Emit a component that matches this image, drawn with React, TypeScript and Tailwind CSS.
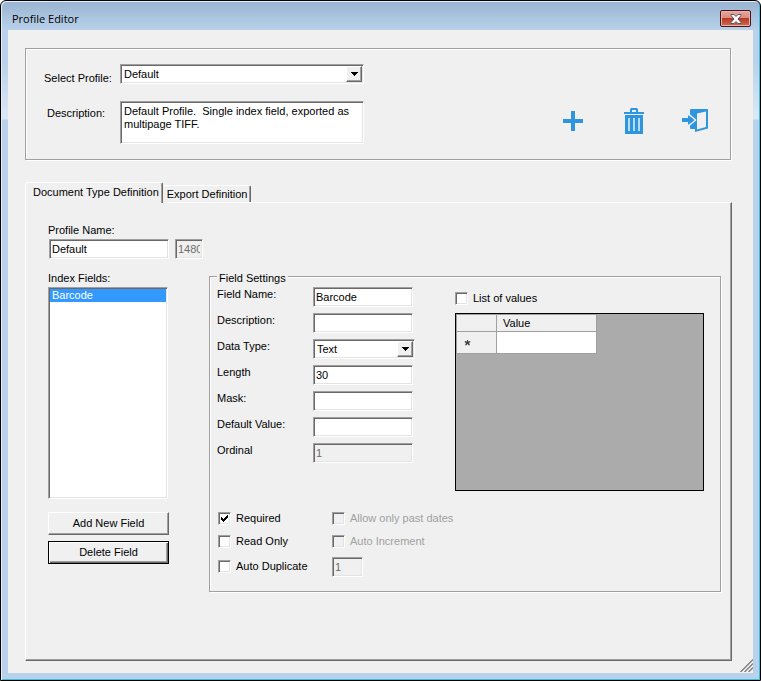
import React from "react";

const sunken =
  "rounded-none border border-t-[#a0a0a0] border-l-[#a0a0a0] border-r-white border-b-white shadow-[inset_1px_1px_0_#696969,inset_-1px_-1px_0_#e3e3e3]";
const raised =
  "border border-t-white border-l-white border-r-[#696969] border-b-[#696969] shadow-[inset_-1px_-1px_0_#a0a0a0]";
const etched =
  "border border-[#a0a0a0] shadow-[1px_1px_0_#ffffff,inset_1px_1px_0_#ffffff]";

type TextBoxProps = {
  id: string;
  value?: string;
  disabled?: boolean;
  className?: string;
  label?: string;
};

function TextBox({ id, value = "", disabled, className = "", label }: TextBoxProps) {
  return (
    <input
      id={id}
      type="text"
      aria-label={label}
      defaultValue={value}
      disabled={disabled}
      className={`h-5 px-[2px] outline-none ${sunken} ${
        disabled ? "bg-[#f0f0f0] text-[#6d6d6d]" : "bg-white"
      } ${className}`}
    />
  );
}

function ComboBox({ id, options, className = "" }: { id: string; options: string[]; className?: string }) {
  return (
    <div className={`relative ${className}`}>
      <select id={id} className={`block h-5 w-full appearance-none bg-white px-[3px] outline-none ${sunken}`}>
        {options.map((o) => (
          <option key={o}>{o}</option>
        ))}
      </select>
      <span
        className={`pointer-events-none absolute top-[2px] right-[2px] flex h-4 w-4 items-center justify-center bg-[#f0f0f0] ${raised}`}
      >
        <svg width="7" height="4" viewBox="0 0 7 4" shapeRendering="crispEdges">
          <path d="M0 0h7v1H0zM1 1h5v1H1zM2 2h3v1H2zM3 3h1v1H3z" />
        </svg>
      </span>
    </div>
  );
}

type CheckProps = { label: string; checked?: boolean; disabled?: boolean };

function Check({ label, checked, disabled }: CheckProps) {
  return (
    <label className={`flex items-center gap-[5px] ${disabled ? "text-[#a0a0a0]" : ""}`}>
      <span className="relative block h-[13px] w-[13px]">
        <input
          type="checkbox"
          defaultChecked={checked}
          disabled={disabled}
          className={`peer block h-[13px] w-[13px] appearance-none bg-white disabled:bg-[#f0f0f0] ${sunken}`}
        />
        <svg
          width="7"
          height="7"
          viewBox="0 0 7 7"
          shapeRendering="crispEdges"
          className="pointer-events-none absolute top-[3px] left-[3px] hidden peer-checked:block"
        >
          <path d="M0 2h1v3H0zM1 3h1v3H1zM2 4h1v3H2zM3 3h1v3H3zM4 2h1v3H4zM5 1h1v3H5zM6 0h1v3H6z" />
        </svg>
      </span>
      {label}
    </label>
  );
}

function PlusIcon() {
  return (
    <svg width="20" height="20" viewBox="0 0 20 20" fill="#2d96de">
      <path d="M8 0h4v8h8v4h-8v8H8v-8H0V8h8z" />
    </svg>
  );
}

function TrashIcon() {
  return (
    <svg width="20" height="26" viewBox="0 0 20 26" fill="#2d96de">
      <path d="M0 4h6V1.500Q6 0 7.500 0h5Q14 0 14 1.500V4h6v2H0zM8 2v2h4V2z" fillRule="evenodd" />
      <path d="M1 7h18v19H1z" />
      <path d="M4 10h2v13H4zM9 10h2v13H9zM14 10h2v13h-2z" fill="#b9dbf3" />
    </svg>
  );
}

function ExitIcon() {
  return (
    <svg width="26" height="24" viewBox="0 0 26 24">
      <path d="M9 0h17v19.500L13 23V20H9Q8 20 8 19V1Q8 0 9 0z" fill="#2d96de" />
      <path d="M15 4.500l9-2v15.500l-9 2.500z" fill="#f0f0f0" />
      <path d="M6.500 5l7 6-7 6" fill="none" stroke="#f0f0f0" strokeWidth="1.500" />
      <path d="M0 9h6V6l6 5-6 5v-3H0z" fill="#2d96de" />
    </svg>
  );
}

const fields = [
  { id: "field-name", label: "Field Name:", value: "Barcode" },
  { id: "field-description", label: "Description:" },
  { id: "data-type", label: "Data Type:", options: ["Text", "Number", "Date"] },
  { id: "length", label: "Length", value: "30" },
  { id: "mask", label: "Mask:" },
  { id: "default-value", label: "Default Value:" },
  { id: "ordinal", label: "Ordinal", value: "1", disabled: true },
];

function ProfileHeader() {
  return (
    <section className={`mt-[18px] mr-[22px] ml-[17px] flex items-start pt-[15px] pr-[22px] pb-[15px] pl-[18px] ${etched}`}>
      <div className="grid grid-cols-[76px_244px] gap-y-[16px]">
        <label htmlFor="profile" className="pt-2">
          Select Profile:
        </label>
        <ComboBox id="profile" options={["Default"]} />
        <label htmlFor="description" className="pt-[6px] pl-[3px]">
          Description:
        </label>
        <textarea
          id="description"
          defaultValue={"Default Profile.  Single index field, exported as multipage TIFF."}
          className={`block h-[43px] resize-none overflow-hidden bg-white px-[3px] pt-[3px] outline-none ${sunken}`}
        />
      </div>
      <div className="mt-11 ml-auto flex h-[26px] items-center">
        <button type="button" aria-label="Add profile" className="mr-[41px]">
          <PlusIcon />
        </button>
        <button type="button" aria-label="Delete profile" className="mr-[38px]">
          <TrashIcon />
        </button>
        <button type="button" aria-label="Exit">
          <ExitIcon />
        </button>
      </div>
    </section>
  );
}

function ValueGrid() {
  return (
    <div className="mt-2 h-[178px] border border-black bg-[#ababab]">
      <table className="w-[141px] table-fixed border-collapse">
        <thead>
          <tr className="h-[17px] bg-[#f0f0f0]">
            <th className="w-10 border border-[#a0a0a0]" />
            <th className="border border-[#a0a0a0] px-[6px] text-left font-normal">Value</th>
          </tr>
        </thead>
        <tbody>
          <tr className="h-[22px]">
            <td className="border border-[#a0a0a0] bg-[#f0f0f0] pl-[7px]">
              <svg width="7" height="6" viewBox="0 0 7 6" fill="#444" className="block">
                <path d="M3 0h1v1.500l2-.5.500 1L5 3l1 2-1 .5L3.500 4 2 5.500 1 5l1-2L.5 2 1 1l2 .5z" />
              </svg>
            </td>
            <td className="border border-[#a0a0a0] bg-white" />
          </tr>
        </tbody>
      </table>
    </div>
  );
}

function FieldSettings() {
  return (
    <fieldset className={`min-w-0 flex-1 self-start pr-4 pb-[11px] pl-[7px] ${etched}`}>
      <legend className="bg-[#f0f0f0] px-[2px] pt-1">Field Settings</legend>
      <div className="flex pt-[2px]">
        <div className="flex w-[238px] flex-col gap-[6px]">
          {fields.map((f) => (
            <div key={f.id} className="flex h-5">
              <label htmlFor={f.id} className="w-24 pt-px">
                {f.label}
              </label>
              {f.options ? (
                <ComboBox id={f.id} options={f.options} className="w-[102px]" />
              ) : (
                <TextBox id={f.id} value={f.value} disabled={f.disabled} className="w-[100px]" />
              )}
            </div>
          ))}
        </div>
        <div className="flex-1 pt-[5px]">
          <Check label="List of values" />
          <ValueGrid />
        </div>
      </div>
      <div className="mt-4 ml-px grid grid-cols-[114px_1fr] grid-rows-[23px_23px_27px] items-center">
        <Check label="Required" checked />
        <Check label="Allow only past dates" disabled />
        <Check label="Read Only" />
        <Check label="Auto Increment" disabled />
        <Check label="Auto Duplicate" />
        <TextBox id="duplicates" label="Duplicate count" value="1" disabled className="w-[31px]" />
      </div>
    </fieldset>
  );
}

function DefinitionTabs() {
  return (
    <div className="mt-[22px] mr-[21px] mb-3 ml-[17px] flex flex-1 flex-col">
      <div role="tablist" className="relative z-10 -mb-px flex items-end">
        <button
          type="button"
          role="tab"
          aria-selected="true"
          className="h-[21px] rounded-t-[2px] border border-b-0 border-t-white border-r-[#696969] border-l-white bg-[#f0f0f0] pr-[3px] pb-[2px] pl-[7px] shadow-[inset_-1px_0_0_#a0a0a0]"
        >
          Document Type Definition
        </button>
        <button
          type="button"
          role="tab"
          aria-selected="false"
          className="mb-px h-[17px] rounded-t-[2px] border border-b-0 border-l-0 border-t-white border-r-[#696969] pr-[3px] pl-1 shadow-[inset_-1px_0_0_#a0a0a0]"
        >
          Export Definition
        </button>
      </div>
      <div role="tabpanel" className={`flex-1 pt-[21px] pr-[10px] pl-[22px] ${raised}`}>
        <label htmlFor="profile-name" className="block">
          Profile Name:
        </label>
        <div className="mt-[2px] flex gap-[6px] pl-px">
          <TextBox id="profile-name" value="Default" className="w-[120px]" />
          <TextBox id="profile-id" label="Profile id" value="1480" disabled className="w-[28px]" />
        </div>
        <div className="mt-[9px] flex">
          <div className="w-[161px] pt-1">
            <div id="index-fields">Index Fields:</div>
            <ul
              role="listbox"
              aria-labelledby="index-fields"
              className={`mt-[2px] h-[212px] w-[120px] bg-white p-px ${sunken}`}
            >
              <li role="option" aria-selected="true" className="bg-[#3399ff] px-[2px] text-white">
                Barcode
              </li>
            </ul>
            <button type="button" className={`mt-[13px] block h-[23px] w-[121px] ${raised}`}>
              Add New Field
            </button>
            <button
              type="button"
              className="mt-[6px] block h-[23px] w-[121px] border border-black shadow-[inset_1px_1px_0_#ffffff,inset_-1px_-1px_0_#696969,inset_-2px_-2px_0_#a0a0a0]"
            >
              Delete Field
            </button>
          </div>
          <FieldSettings />
        </div>
      </div>
    </div>
  );
}

export default function App() {
  return (
    <div className="flex min-h-screen flex-col rounded-t-[6px] border border-black bg-[linear-gradient(180deg,#99b4d1_0px,#b9d1ea_29px,#b9d1ea_60px,#dce8f5_118px,#b9d1ea_119px)] font-['Liberation_Sans',Arial,sans-serif] text-[11px] leading-[13px] text-black shadow-[inset_1px_1px_0_#e4f0fb,inset_-1px_-1px_0_#38bfe0]">
      <header className="flex h-[29px] items-start pr-[9px] pl-[11px]">
        <h1 className="pt-[9px] font-['Open_Sans','Noto_Sans',sans-serif] text-[11px] leading-[17px]">Profile Editor</h1>
        <button
          type="button"
          aria-label="Close"
          className="mt-[9px] ml-auto flex h-[17px] w-[31px] items-center justify-center rounded-[2px] border border-[#47131c] bg-[linear-gradient(180deg,#e8a79c_0%,#d98a7c_48%,#b83a22_50%,#cf6a54_100%)] shadow-[inset_0_0_0_1px_#e9b3aa]"
        >
          <svg width="12" height="10" viewBox="0 0 12 10">
            <path
              d="M1 .5h3L6 2.500 8 .5h3v1L8 5l3 3.500v1H8L6 7.500l-2 2H1v-1L4 5 1 1.500z"
              fill="#fff"
              stroke="#535666"
              strokeWidth="1"
            />
          </svg>
        </button>
      </header>
      <main className="relative mx-[7px] mb-[7px] flex flex-1 flex-col bg-[#f0f0f0]">
        <ProfileHeader />
        <DefinitionTabs />
        <svg width="13" height="13" viewBox="0 0 13 13" className="absolute right-0 bottom-px">
          <path d="M-.5 12.500l13-13M3.500 12.500l9-9M7.500 12.500l5-5" stroke="#fff" strokeWidth="1" />
          <path d="M.5 13L13 .5M4.500 13L13 4.500M8.500 13L13 8.500" stroke="#808080" strokeWidth="1.500" />
        </svg>
      </main>
    </div>
  );
}
